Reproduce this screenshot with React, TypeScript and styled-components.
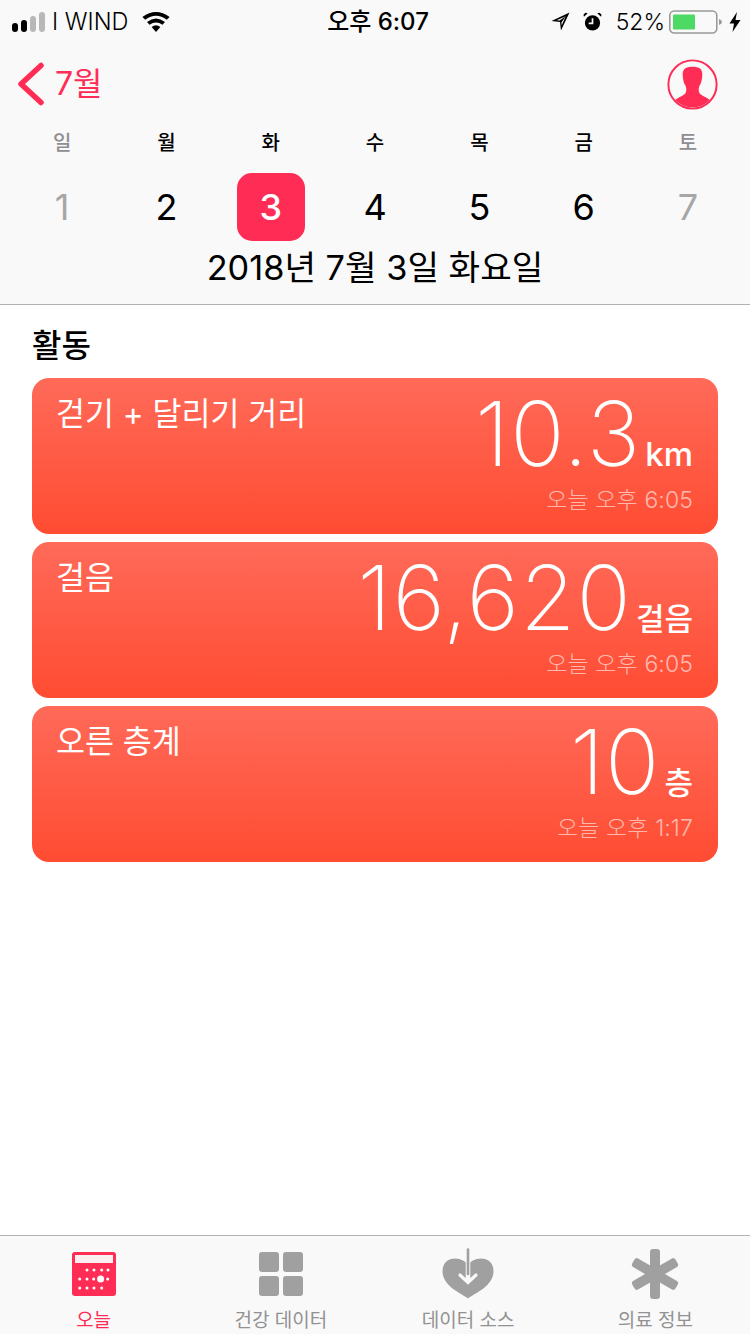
import React from "react";
import styled, { createGlobalStyle } from "styled-components";

const FONT = `Inter, "Noto Sans CJK KR", sans-serif`;

const Global = createGlobalStyle`
  html, body { margin: 0; padding: 0; background: #fff; }
  body { font-family: ${FONT}; }
  * { box-sizing: border-box; }
`;

const Page = styled.div`
  width: 750px;
  height: 1334px;
  display: flex;
  flex-direction: column;
  overflow: hidden;
  background: #fff;
  color: #000;
`;

const Header = styled.header`
  height: 305px;
  flex: none;
  background: #f9f9f9;
  border-bottom: 1px solid #b2b2b2;
`;

const StatusBar = styled.div`
  height: 43px;
  padding: 0 9px 0 12px;
  display: grid;
  grid-template-columns: 1fr auto 1fr;
  align-items: center;
  font-size: 24px;
  line-height: 40px;
`;

const StatusLeft = styled.div`
  display: flex;
  align-items: center;
`;

const Carrier = styled.span`
  margin-left: 7px;
  margin-right: 14px;
  font-weight: 300;
  font-size: 23.5px;
`;

const Clock = styled.div`
  margin-left: 3px;
  font-weight: 500;
  font-size: 24px;
`;

const StatusRight = styled.div`
  display: flex;
  align-items: center;
  justify-content: flex-end;
`;

const Percent = styled.span`
  margin: 0 4px 0 14px;
  font-weight: 300;
  font-size: 23px;
`;

const Nav = styled.div`
  height: 77px;
  padding: 5px 32px 0 17px;
  display: flex;
  align-items: center;
  justify-content: space-between;
`;

const Back = styled.div`
  display: flex;
  align-items: center;
  gap: 10px;
  color: #ff2d55;
  font-size: 32px;
  line-height: 44px;
`;

const WeekGrid = styled.div`
  display: grid;
  grid-template-columns: repeat(7, 104.3px);
  padding: 0 10px;
`;

const DayName = styled.div<{ $muted: boolean }>`
  height: 44px;
  padding-top: 1px;
  text-align: center;
  font-size: 20px;
  line-height: 44px;
  font-weight: 500;
  color: ${(p) => (p.$muted ? "#8e8e93" : "#000")};
`;

const DayCell = styled.div`
  height: 68px;
  margin-top: 9px;
  display: flex;
  justify-content: center;
`;

const DayNum = styled.div<{ $muted: boolean; $active: boolean }>`
  width: 68px;
  height: 68px;
  border-radius: 15px;
  display: flex;
  align-items: center;
  justify-content: center;
  font-size: 36px;
  font-weight: ${(p) => (p.$active ? 500 : 400)};
  background: ${(p) => (p.$active ? "#ff2d55" : "transparent")};
  color: ${(p) => (p.$active ? "#fff" : p.$muted ? "#a6a6a6" : "#000")};
`;

const DateTitle = styled.div`
  padding-top: 1px;
  text-align: center;
  font-size: 34.3px;
  line-height: 52px;
`;

const Main = styled.main`
  flex: 1;
  padding: 16px 32px 0;
`;

const SectionTitle = styled.h2`
  margin: 0 0 7px;
  font-size: 32px;
  line-height: 50px;
  font-weight: 500;
`;

const CardList = styled.div`
  display: flex;
  flex-direction: column;
  gap: 8px;
`;

const Card = styled.article`
  height: 156px;
  border-radius: 17px;
  padding: 14px 25px 18px 24px;
  color: #fff;
  background: linear-gradient(180deg, #ff6a59 0%, #ff4c32 100%);
  display: flex;
  justify-content: space-between;
`;

const CardLabel = styled.div`
  font-size: 31.5px;
  line-height: 44px;
`;

const CardRight = styled.div`
  display: flex;
  flex-direction: column;
  align-items: flex-end;
`;

const ValueRow = styled.div`
  display: flex;
  align-items: baseline;
  gap: 4px;
  height: 93px;
`;

const Value = styled.span`
  font-size: 90px;
  line-height: 84px;
  font-weight: 250;
  letter-spacing: 1px;
`;

const Unit = styled.span<{ $latin: boolean }>`
  font-size: ${(p) => (p.$latin ? 33 : 31)}px;
  font-weight: 500;
`;

const Time = styled.div`
  font-size: 23px;
  line-height: 30px;
  letter-spacing: 0.1px;
  color: rgba(255, 255, 255, 0.6);
  font-weight: 300;
`;

const TabBar = styled.nav`
  height: 99px;
  flex: none;
  background: #f9f9f9;
  border-top: 1px solid #b2b2b2;
  display: grid;
  grid-template-columns: repeat(4, 187.25px);
`;

const Tab = styled.div<{ $active?: boolean }>`
  display: flex;
  flex-direction: column;
  align-items: center;
  color: ${(p) => (p.$active ? "#ff2d55" : "#929292")};
  font-size: 19px;
`;

const TabIcon = styled.div`
  height: 73px;
  padding-top: 3px;
  display: flex;
  align-items: center;
  justify-content: center;
`;

const TabLabel = styled.div`
  margin-top: -1px;
  line-height: 26px;
`;

const Signal = () => (
  <svg width="33" height="20" viewBox="0 0 33 20">
    <rect x="0" y="11" width="6" height="9" rx="3" fill="#000" />
    <rect x="9" y="8" width="6" height="12" rx="3" fill="#000" />
    <rect x="18" y="4" width="6" height="16" rx="3" fill="#b8b8b8" />
    <rect x="27" y="0" width="6" height="20" rx="3" fill="#b8b8b8" />
  </svg>
);

const Wifi = () => (
  <svg width="28" height="20" viewBox="0 0 28 20">
    <path d="M14 20 L9.6 15 Q14 11.5 18.4 15 Z" fill="#000" />
    <path d="M7.6 12.8 L5 10 Q14 2.8 23 10 L20.4 12.8 Q14 8 7.6 12.8 Z" fill="#000" />
    <path d="M3.2 7.8 L0.4 5 Q14 -5 27.6 5 L24.8 7.8 Q14 -0.5 3.2 7.8 Z" fill="#000" />
  </svg>
);

const Location = () => (
  <svg width="19" height="19" viewBox="0 0 20 20">
    <path d="M19.5 0.5 L0.5 9.5 L9.5 10.5 L10.5 19.5 Z M15.5 4.5 L9 9 L6 8.7 Z M15.5 4.5 L11 11 L11.3 14 Z" fill="#000" fillRule="evenodd" />
  </svg>
);

const Alarm = () => (
  <svg width="19" height="19" viewBox="0 0 20 20" style={{ marginLeft: 13 }}>
    <circle cx="10" cy="11.5" r="8" fill="#000" />
    <path d="M10 6.5 V12 H6" stroke="#f9f9f9" strokeWidth="1.8" fill="none" />
    <path d="M1 5 L5 1.2 L2.5 0.8 L0.5 3 Z M19 5 L15 1.2 L17.5 0.8 L19.5 3 Z" fill="#000" />
  </svg>
);

const Battery = () => (
  <svg width="53" height="24" viewBox="0 0 53 24">
    <rect x="0.8" y="1" width="47" height="22" rx="4.5" fill="none" stroke="#999" strokeWidth="1.6" />
    <rect x="4" y="4.5" width="22" height="15" rx="1" fill="#4cd964" />
    <path d="M50 9 Q53 10 53 12 Q53 14 50 15 Z" fill="#999" />
  </svg>
);

const Bolt = () => (
  <svg width="12" height="20" viewBox="0 0 12 20" style={{ marginLeft: 7 }}>
    <path d="M8 0 L0.5 11.5 H5 L3.5 20 L11.5 8 H6.5 Z" fill="#000" />
  </svg>
);

const Chevron = () => (
  <svg width="28" height="44" viewBox="0 0 28 44">
    <path d="M24 3.5 L4 22 L24 40.5" stroke="#ff2d55" strokeWidth="5.5" strokeLinecap="round" strokeLinejoin="round" fill="none" />
  </svg>
);

const Profile = () => (
  <svg width="51" height="51" viewBox="0 0 52 52">
    <defs>
      <clipPath id="profile-clip">
        <circle cx="26" cy="26" r="23.5" />
      </clipPath>
    </defs>
    <circle cx="26" cy="26" r="24.6" fill="none" stroke="#ff2d55" strokeWidth="2" />
    <g clipPath="url(#profile-clip)" fill="#ff2d55">
      <path d="M26 8 C33 8 36 10.5 36 15.5 C36 20.5 35 24.5 33 27.5 C32 30.5 32 33 33.5 35.5 C37 38.5 42 39.5 45 43 L45 52 L7 52 L7 43 C10 39.5 15 38.5 18.5 35.5 C20 33 20 30.5 19 27.5 C17 24.5 16 20.5 16 15.5 C16 10.5 19 8 26 8 Z" />
    </g>
  </svg>
);

const CalendarIcon = () => (
  <svg width="44" height="44" viewBox="0 0 44 44">
    <rect width="44" height="44" rx="3" fill="#ff2d55" />
    <rect x="3" y="3" width="38" height="8" fill="#fbeef1" />
    <g fill="#fff">
      {[15, 22, 29.7, 36].map((x) => <circle key={x} cx={x} cy="18" r="1.5" />)}
      {[7.7, 15, 21.7, 35.7].map((x) => <circle key={x} cx={x} cy="27" r="1.5" />)}
      <circle cx="28.6" cy="27" r="3.5" />
      {[7.7, 15, 22, 29.7].map((x) => <circle key={x} cx={x} cy="36" r="1.5" />)}
    </g>
  </svg>
);

const GridIcon = () => (
  <svg width="44" height="44" viewBox="0 0 44 44" fill="#a0a0a0">
    <rect x="0" y="0" width="20" height="20" rx="3" />
    <rect x="24" y="0" width="20" height="20" rx="3" />
    <rect x="0" y="24" width="20" height="20" rx="3" />
    <rect x="24" y="24" width="20" height="20" rx="3" />
  </svg>
);

const HeartIcon = () => (
  <svg width="52" height="52" viewBox="0 0 52 52">
    <path d="M26 50.5 C18 44.5 0.5 38 0.5 23 C0.5 15 6 10.5 13 10.5 C19 10.5 24 13.5 26 17 C28 13.5 33 10.5 39 10.5 C46 10.5 51.5 15 51.5 23 C51.5 38 34 44.5 26 50.5 Z" fill="#a0a0a0" />
    <path d="M26 11 V34" stroke="#f9f9f9" strokeWidth="4.6" />
    <path d="M26 1.5 V26" stroke="#a0a0a0" strokeWidth="2.6" strokeLinecap="round" />
    <path d="M18 27 L26 34.5 L34 27" stroke="#f9f9f9" strokeWidth="3.2" fill="none" strokeLinecap="round" />
  </svg>
);

const StarIcon = () => (
  <svg width="50" height="50" viewBox="0 0 50 50" fill="#a0a0a0">
    <rect x="20" y="0" width="10" height="50" rx="3" />
    <rect x="20" y="0" width="10" height="50" rx="3" transform="rotate(60 25 25)" />
    <rect x="20" y="0" width="10" height="50" rx="3" transform="rotate(-60 25 25)" />
  </svg>
);

const days = ["일", "월", "화", "수", "목", "금", "토"];

const cards = [
  { label: "걷기 + 달리기 거리", value: "10.3", unit: "km", latin: true, time: "오늘 오후 6:05" },
  { label: "걸음", value: "16,620", unit: "걸음", latin: false, time: "오늘 오후 6:05" },
  { label: "오른 층계", value: "10", unit: "층", latin: false, time: "오늘 오후 1:17" },
];

const tabs = [
  { label: "오늘", icon: <CalendarIcon />, active: true },
  { label: "건강 데이터", icon: <GridIcon /> },
  { label: "데이터 소스", icon: <HeartIcon /> },
  { label: "의료 정보", icon: <StarIcon /> },
];

export default function App() {
  return (
    <Page>
      <Global />
      <Header>
        <StatusBar>
          <StatusLeft>
            <Signal />
            <Carrier>I WIND</Carrier>
            <Wifi />
          </StatusLeft>
          <Clock>오후 6:07</Clock>
          <StatusRight>
            <Location />
            <Alarm />
            <Percent>52%</Percent>
            <Battery />
            <Bolt />
          </StatusRight>
        </StatusBar>
        <Nav>
          <Back>
            <Chevron />
            7월
          </Back>
          <Profile />
        </Nav>
        <WeekGrid>
          {days.map((d, i) => (
            <DayName key={d} $muted={i === 0 || i === 6}>{d}</DayName>
          ))}
          {days.map((d, i) => (
            <DayCell key={d}>
              <DayNum $muted={i === 0 || i === 6} $active={i === 2}>{i + 1}</DayNum>
            </DayCell>
          ))}
        </WeekGrid>
        <DateTitle>2018년 7월 3일 화요일</DateTitle>
      </Header>
      <Main>
        <SectionTitle>활동</SectionTitle>
        <CardList>
          {cards.map((c) => (
            <Card key={c.label}>
              <CardLabel>{c.label}</CardLabel>
              <CardRight>
                <ValueRow>
                  <Value>{c.value}</Value>
                  <Unit $latin={c.latin}>{c.unit}</Unit>
                </ValueRow>
                <Time>{c.time}</Time>
              </CardRight>
            </Card>
          ))}
        </CardList>
      </Main>
      <TabBar>
        {tabs.map((t) => (
          <Tab key={t.label} $active={t.active}>
            <TabIcon>{t.icon}</TabIcon>
            <TabLabel>{t.label}</TabLabel>
          </Tab>
        ))}
      </TabBar>
    </Page>
  );
}
